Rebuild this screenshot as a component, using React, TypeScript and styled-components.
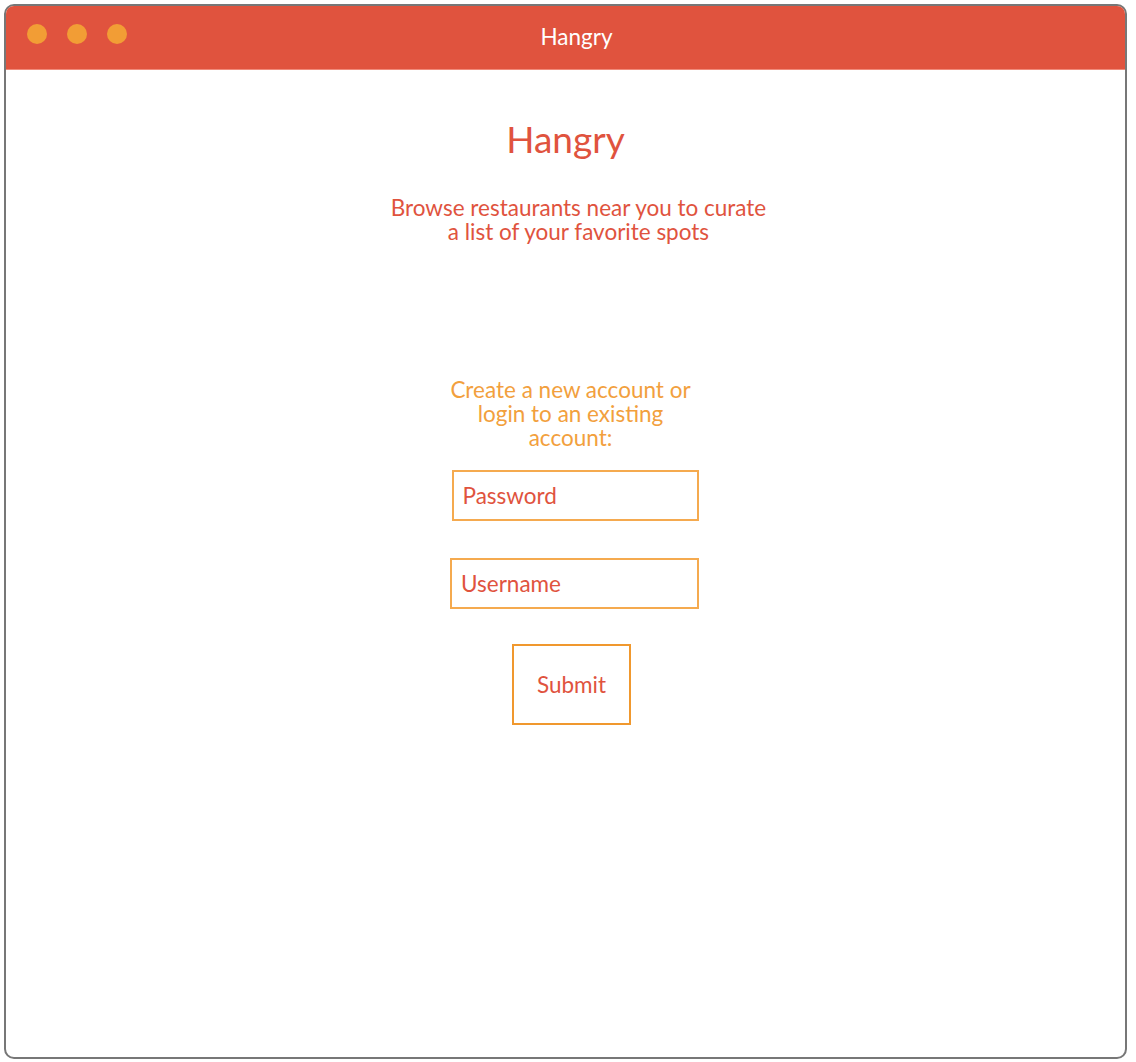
import React from "react";
import styled, { createGlobalStyle } from "styled-components";

const Global = createGlobalStyle`
  html, body { margin: 0; padding: 0; background: #ffffff; }
  body { font-family: Lato, "Open Sans", sans-serif; }
  * { box-sizing: border-box; }
`;

const Win = styled.div`
  margin: 4px 0 0 4px;
  width: 1123px;
  height: 1055px;
  border: 2px solid #777777;
  border-radius: 10px;
  overflow: hidden;
  display: flex;
  flex-direction: column;
  background: #ffffff;
`;

const TitleBar = styled.div`
  position: relative;
  height: 64px;
  flex: 0 0 64px;
  background: #e0533e;
  border-bottom: 1px solid #f08a7a;
  display: flex;
  align-items: center;
  justify-content: center;
`;

const Dots = styled.div`
  position: absolute;
  left: 21px;
  top: 18px;
  display: flex;
  gap: 20px;
`;

const Dot = styled.span`
  width: 20px;
  height: 20px;
  border-radius: 50%;
  background: #f29d35;
`;

const BarTitle = styled.div`
  color: #ffffff;
  font-size: 22.5px;
  margin-left: 22px;
  margin-top: -2px;
`;

const Content = styled.div`
  flex: 1;
  display: flex;
  flex-direction: column;
  align-items: center;
`;

const Heading = styled.h1`
  margin: 46px 0 0 0;
  font-weight: 400;
  font-size: 37px;
  line-height: 46px;
  color: #e0533e;
`;

const Sub = styled.p`
  margin: 34px 0 0 26px;
  font-size: 22.5px;
  line-height: 24px;
  color: #e0533e;
  text-align: center;
`;

const Prompt = styled.p`
  margin: 134px 0 0 10px;
  width: 250px;
  font-size: 22.5px;
  line-height: 24px;
  color: #f2a03d;
  text-align: center;
`;

const Field = styled.div<{ $shift: number; $w: number }>`
  margin-left: ${(p) => p.$shift}px;
  width: ${(p) => p.$w}px;
  height: 51px;
  border: 2px solid #f5aa4f;
  display: flex;
  align-items: center;
  padding-left: 9px;
  font-size: 22.5px;
  color: #e0533e;
`;

const Form = styled.div`
  margin-top: 20px;
  display: flex;
  flex-direction: column;
  align-items: center;
  gap: 37px;
`;

const Submit = styled.div`
  margin: -2px 0 0 12px;
  width: 119px;
  height: 81px;
  border: 2px solid #f0982e;
  display: flex;
  align-items: center;
  justify-content: center;
  font-size: 22.5px;
  color: #e0533e;
`;

export default function App() {
  return (
    <>
      <Global />
      <Win>
        <TitleBar>
          <Dots>
            <Dot />
            <Dot />
            <Dot />
          </Dots>
          <BarTitle>Hangry</BarTitle>
        </TitleBar>
        <Content>
          <Heading>Hangry</Heading>
          <Sub>
            Browse restaurants near you to curate
            <br />a list of your favorite spots
          </Sub>
          <Prompt>Create a new account or login to an existing account:</Prompt>
          <Form>
            <Field $shift={19} $w={247}>Password</Field>
            <Field $shift={18} $w={249}>Username</Field>
            <Submit>Submit</Submit>
          </Form>
        </Content>
      </Win>
    </>
  );
}
